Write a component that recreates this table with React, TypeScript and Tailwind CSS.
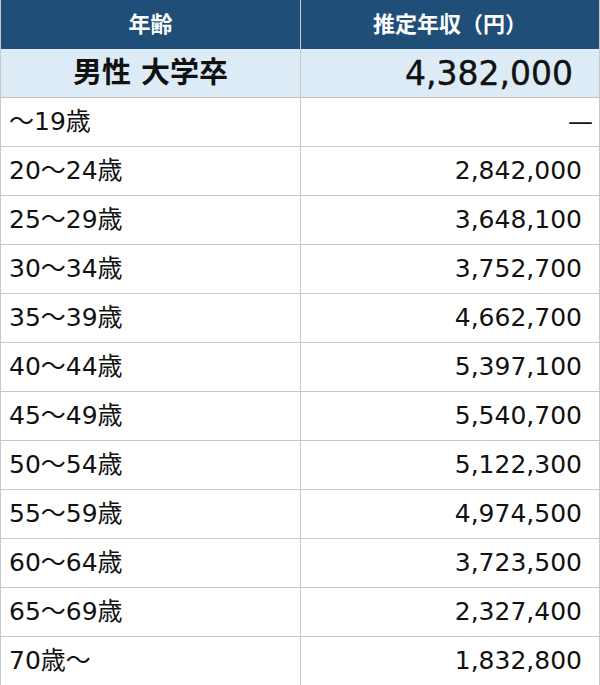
import React from "react";

const rows: [string, string][] = [
  ["～19歳", "—"],
  ["20～24歳", "2,842,000"],
  ["25～29歳", "3,648,100"],
  ["30～34歳", "3,752,700"],
  ["35～39歳", "4,662,700"],
  ["40～44歳", "5,397,100"],
  ["45～49歳", "5,540,700"],
  ["50～54歳", "5,122,300"],
  ["55～59歳", "4,974,500"],
  ["60～64歳", "3,723,500"],
  ["65～69歳", "2,327,400"],
  ["70歳～", "1,832,800"],
];

const font = { fontFamily: '"DejaVu Sans", "Noto Sans CJK JP", sans-serif' };

export default function App() {
  return (
    <div className="w-[600px] h-[685px] bg-white text-[#111]" style={font}>
      <div className="border-x border-[#c8c8c8]">
        <div className="grid grid-cols-[300px_1fr] h-[49px] bg-[#1f4e79] text-white text-[22px] font-bold">
          <div className="flex items-center justify-center border-r border-[#c8c8c8]">年齢</div>
          <div className="flex items-center justify-center">推定年収（円）</div>
        </div>
        <div className="grid grid-cols-[300px_1fr] h-[49px] bg-[#ddebf7] border-b border-[#c0c4c8]">
          <div className="flex items-center justify-center border-r border-[#c8c8c8] text-[29px] font-bold">男性 大学卒</div>
          <div className="flex items-center justify-end pr-[26px] text-[33px] [-webkit-text-stroke:0.4px_#111]">4,382,000</div>
        </div>
        {rows.map(([a, b]) => (
          <div key={a} className="grid grid-cols-[300px_1fr] h-[49px] border-b border-[#c8c8c8] text-[25px]">
            <div className="flex items-center pl-[8px] border-r border-[#c8c8c8]">{a}</div>
            <div className={"flex items-center justify-end " + (b === "—" ? "pr-[6px]" : "pr-[17px]")}>{b}</div>
          </div>
        ))}
      </div>
    </div>
  );
}
